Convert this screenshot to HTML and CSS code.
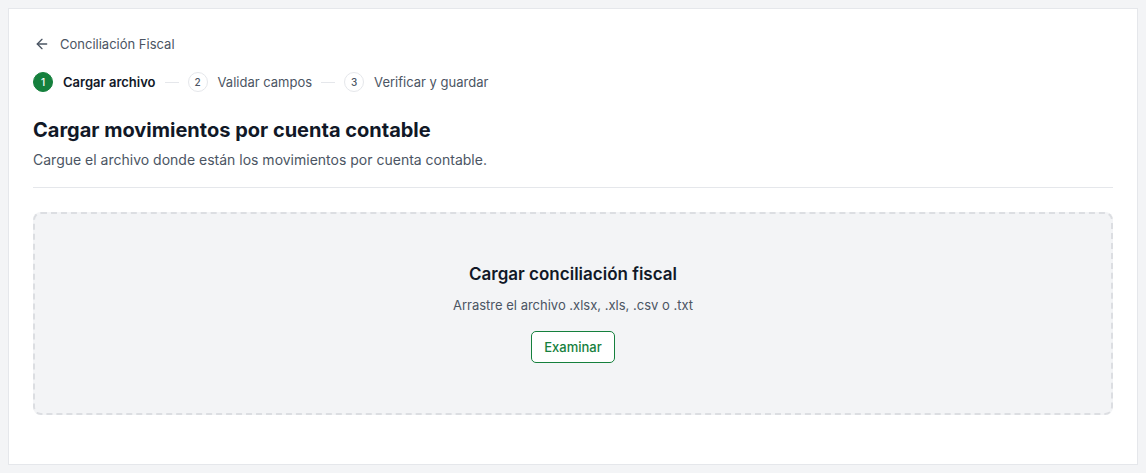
FILE: index.html
```html
<!DOCTYPE html>
<html lang="es">
<head>
<meta charset="utf-8">
<title>Conciliación Fiscal</title>
<link rel="stylesheet" href="styles.css">
</head>
<body>
<article class="page">
  <a class="back" href="#">
    <svg width="16" height="16" viewBox="0 0 24 24" fill="none" stroke="currentColor" stroke-width="2" stroke-linecap="round" stroke-linejoin="round"><path d="M19 12H5"/><path d="M12 19l-7-7 7-7"/></svg>
    <span>Conciliación Fiscal</span>
  </a>
  <ol class="steps">
    <li class="step active"><span class="num">1</span><span class="label">Cargar archivo</span></li>
    <li class="sep"></li>
    <li class="step"><span class="num">2</span><span class="label">Validar campos</span></li>
    <li class="sep"></li>
    <li class="step"><span class="num">3</span><span class="label">Verificar y guardar</span></li>
  </ol>
  <header class="head">
    <h1>Cargar movimientos por cuenta contable</h1>
    <p class="desc">Cargue el archivo donde están los movimientos por cuenta contable.</p>
  </header>
  <section class="drop">
    <h2>Cargar conciliación fiscal</h2>
    <p class="hint">Arrastre el archivo .xlsx, .xls, .csv o .txt</p>
    <button type="button">Examinar</button>
  </section>
</article>
</body>
</html>
```
FILE: styles.css
```css
*{margin:0;padding:0;box-sizing:border-box}
body{padding:8px;background:#f3f4f6;font-family:Inter,"Liberation Sans",sans-serif;color:#111827}
.page{height:457px;padding:25px 24px 24px;border:1px solid #e5e7eb;background:#fff}
.back{display:flex;align-items:center;gap:10px;height:20px;font-size:13px;line-height:20px;color:#4b5563;text-decoration:none}
.back svg{color:#4b5563;margin-left:1px}
.steps{display:flex;align-items:center;gap:9px;margin-top:18px;list-style:none}
.step{display:flex;align-items:center;gap:10px;font-size:13px;line-height:20px;color:#4b5563}
.step .num{display:flex;align-items:center;justify-content:center;width:20px;height:20px;border:1px solid #e5e7eb;border-radius:50%;font-size:10px;font-weight:500;color:#4b5563}
.step.active .num{border-color:#15803d;background:#15803d;color:#fff}
.step.active .label{font-weight:600;color:#111827}
.sep{width:14px;height:1px;background:#e5e7eb}
.head{margin-top:24px;padding-bottom:17px;border-bottom:1px solid #e5e7eb}
.head h1{font-size:20px;line-height:28px;font-weight:700}
.head .desc{margin-top:6px;font-size:14px;line-height:20px;color:#4b5563}
.drop{display:flex;flex-direction:column;align-items:center;justify-content:center;height:203px;margin-top:24px;padding-bottom:2px;border:2px dashed #dcdee2;border-radius:8px;background:#f3f4f6}
.drop h2{font-size:17px;line-height:24px;font-weight:600}
.drop .hint{margin-top:10px;font-size:13px;line-height:18px;color:#4b5563}
.drop button{margin-top:17px;height:32px;padding:0 12px;border:1px solid #15803d;border-radius:5px;background:#fff;font-family:inherit;font-size:13px;font-weight:500;color:#15803d;cursor:pointer}
```
